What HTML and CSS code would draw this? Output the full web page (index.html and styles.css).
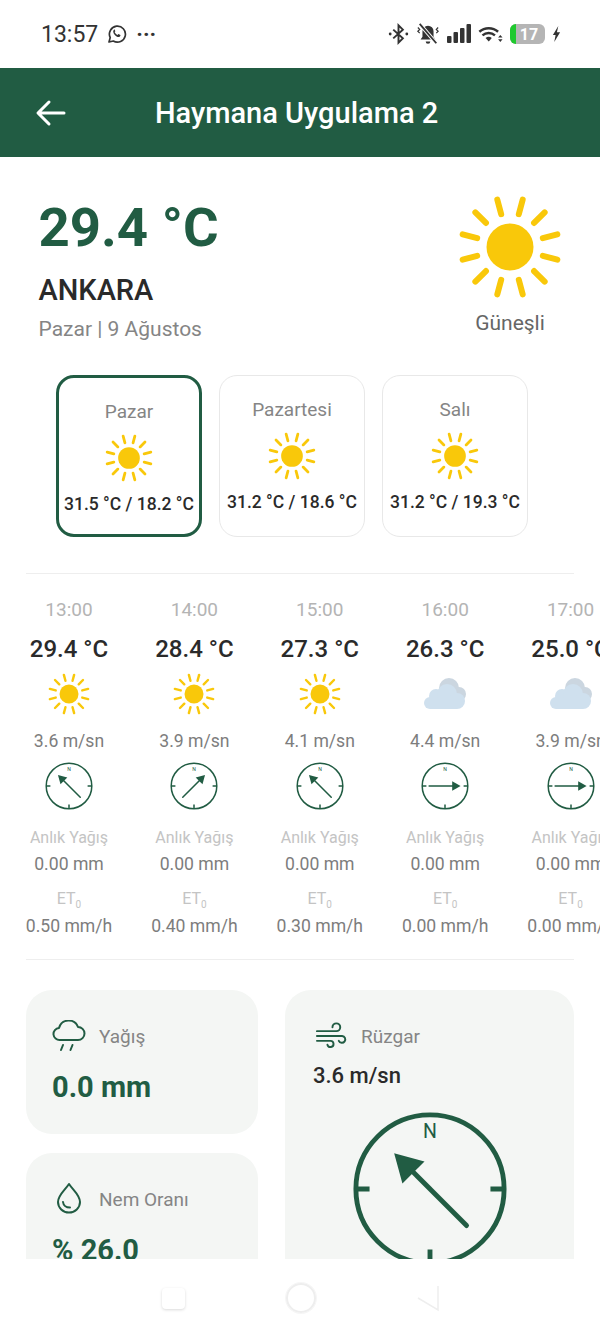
FILE: index.html
```html
<html>
<head>
  <meta charset="UTF-8">
  <meta name="viewport" content="width=device-width, initial-scale=1.0">
  <title>Haymana Uygulama 2</title>
  <link rel="stylesheet" href="styles.css">
</head>
<body>
  <!-- shared icons -->
  <svg class="defs" width="0" height="0">
    <defs>
      <symbol id="sun" viewBox="0 0 104 104">
        <circle cx="52" cy="52" r="23.5" fill="#f9c80a"/>
        <g stroke="#f9c80a" stroke-width="6" stroke-linecap="round">
          <path d="M52 18 V3" transform="rotate(15 52 52)"/>
          <path d="M52 18 V3" transform="rotate(45 52 52)"/>
          <path d="M52 18 V3" transform="rotate(75 52 52)"/>
          <path d="M52 18 V3" transform="rotate(105 52 52)"/>
          <path d="M52 18 V3" transform="rotate(135 52 52)"/>
          <path d="M52 18 V3" transform="rotate(165 52 52)"/>
          <path d="M52 18 V3" transform="rotate(195 52 52)"/>
          <path d="M52 18 V3" transform="rotate(225 52 52)"/>
          <path d="M52 18 V3" transform="rotate(255 52 52)"/>
          <path d="M52 18 V3" transform="rotate(285 52 52)"/>
          <path d="M52 18 V3" transform="rotate(315 52 52)"/>
          <path d="M52 18 V3" transform="rotate(345 52 52)"/>
        </g>
      </symbol>
      <symbol id="cloud" viewBox="0 0 42 42">
        <g fill="#cbd6e0">
          <circle cx="25" cy="15" r="10"/>
          <circle cx="35" cy="21" r="7"/>
          <rect x="16" y="18" width="19" height="10"/>
        </g>
        <g fill="#cfe0ee">
          <circle cx="6" cy="30" r="6"/>
          <circle cx="12" cy="23" r="7"/>
          <circle cx="23" cy="21" r="10"/>
          <circle cx="33" cy="28" r="8"/>
          <rect x="6" y="26" width="27" height="10"/>
        </g>
      </symbol>
      <g id="face" fill="none" stroke="#215c43">
        <circle r="76" stroke-width="5"/>
        <path d="M-76 0H-62M76 0H62M0 76V62" stroke-width="5"/>
      </g>
      <g id="needle" fill="#215c43">
        <path d="M0 -52L16 -24H-16Z"/>
        <path d="M0 -26V53" stroke="#215c43" stroke-width="5" stroke-linecap="round"/>
      </g>
    </defs>
  </svg>

  <div class="status-bar">
    <div class="status-left">
      <span class="clock">13:57</span>
      <svg width="20" height="20" viewBox="0 0 20 20">
        <path d="M2 18l1.200-4.400A8 8 0 1 1 6.300 17z" fill="none" stroke="#333" stroke-width="1.700" stroke-linejoin="round"/>
        <path d="M7 5.800c-1.300 1-1 3 .6 4.900 1.700 2 3.700 2.900 5 2.100.8-.5 1-1.300.8-1.700l-2-1-.9 1c-1.200-.5-2.300-1.700-2.900-3l.8-.9-.9-2z" fill="#333"/>
      </svg>
      <span class="more">···</span>
    </div>
    <div class="status-right">
      <svg width="21" height="24" viewBox="0 0 24 24" fill="none" stroke="#333" stroke-width="2.200">
        <path d="M6 7l11 10-5 5V2l5 5L6 17"/>
        <circle cx="2.500" cy="12" r="1.600" fill="#333" stroke="none"/>
        <circle cx="21.500" cy="12" r="1.600" fill="#333" stroke="none"/>
      </svg>
      <svg width="24" height="24" viewBox="0 0 26 24">
        <path d="M13 3a6 6 0 0 0-6 6v6l-2 3h16l-2-3V9a6 6 0 0 0-6-6z" fill="#333"/>
        <path d="M10.500 20a2.500 2.500 0 0 0 5 0z" fill="#333"/>
        <path d="M4 1l18 21" stroke="#fff" stroke-width="4"/>
        <path d="M4 1l18 21" stroke="#333" stroke-width="2"/>
        <path d="M2 5l2 2-2 2 2 2M24 5l-2 2 2 2-2 2" fill="none" stroke="#333" stroke-width="1.300"/>
      </svg>
      <svg width="24" height="20" viewBox="0 0 24 20" fill="#333">
        <rect x="0" y="12" width="4.500" height="7" rx="1"/>
        <rect x="6.500" y="8" width="4.500" height="11" rx="1"/>
        <rect x="13" y="4" width="4.500" height="15" rx="1"/>
        <rect x="19.500" y="0" width="4.500" height="19" rx="1"/>
      </svg>
      <svg width="25" height="20" viewBox="0 0 28 20">
        <path d="M1.500 7.500a16 16 0 0 1 21 0M5 11.500a11 11 0 0 1 14 0" fill="none" stroke="#333" stroke-width="2.800"/>
        <path d="M8.500 14.500a5.500 5.500 0 0 1 7 0L12 18.500z" fill="#333"/>
        <path d="M25 11l2.500 3h-5zM25 19l2.500-3h-5z" fill="#333"/>
      </svg>
      <div class="battery">
        <span class="battery-level"></span>
        <span class="battery-text">17</span>
      </div>
      <svg width="9" height="18" viewBox="0 0 10 18" fill="#333">
        <path d="M7 0L1 10h3l-1.500 8L9 7H5.500z"/>
      </svg>
    </div>
  </div>

  <div class="app-bar">
    <svg class="back" width="32" height="28" viewBox="0 0 32 28" fill="none" stroke="#fff" stroke-width="3" stroke-linecap="round" stroke-linejoin="round">
      <path d="M29 14H4M14 3L3 14l11 11"/>
    </svg>
    <h1>Haymana Uygulama 2</h1>
  </div>

  <div class="content">
    <div class="hero">
      <div>
        <div class="hero-temp">29.4 °C</div>
        <div class="hero-city">ANKARA</div>
        <div class="hero-date">Pazar | 9 Ağustos</div>
      </div>
      <div class="hero-side">
        <svg width="104" height="104"><use href="#sun"/></svg>
        <span>Güneşli</span>
      </div>
    </div>

    <div class="days">
      <div class="day active">
        <span class="day-name">Pazar</span>
        <svg width="48" height="48"><use href="#sun"/></svg>
        <span class="day-temp">31.5 °C / 18.2 °C</span>
      </div>
      <div class="day">
        <span class="day-name">Pazartesi</span>
        <svg width="48" height="48"><use href="#sun"/></svg>
        <span class="day-temp">31.2 °C / 18.6 °C</span>
      </div>
      <div class="day">
        <span class="day-name">Salı</span>
        <svg width="48" height="48"><use href="#sun"/></svg>
        <span class="day-temp">31.2 °C / 19.3 °C</span>
      </div>
    </div>

    <div class="hours">
      <div class="hour">
        <span class="hour-time">13:00</span>
        <span class="hour-temp">29.4 °C</span>
        <svg class="hour-icon" width="42" height="42"><use href="#sun"/></svg>
        <span class="hour-value">3.6 m/sn</span>
        <svg class="hour-compass" width="48" height="48" viewBox="-80 -80 160 160"><use href="#face"/><use href="#needle" transform="rotate(-45)"/><text class="compass-n small" y="-50">N</text></svg>
        <span class="hour-label">Anlık Yağış</span>
        <span class="hour-value">0.00 mm</span>
        <span class="hour-label et">ET<sub>0</sub></span>
        <span class="hour-value">0.50 mm/h</span>
      </div>
      <div class="hour">
        <span class="hour-time">14:00</span>
        <span class="hour-temp">28.4 °C</span>
        <svg class="hour-icon" width="42" height="42"><use href="#sun"/></svg>
        <span class="hour-value">3.9 m/sn</span>
        <svg class="hour-compass" width="48" height="48" viewBox="-80 -80 160 160"><use href="#face"/><use href="#needle" transform="rotate(45)"/><text class="compass-n small" y="-50">N</text></svg>
        <span class="hour-label">Anlık Yağış</span>
        <span class="hour-value">0.00 mm</span>
        <span class="hour-label et">ET<sub>0</sub></span>
        <span class="hour-value">0.40 mm/h</span>
      </div>
      <div class="hour">
        <span class="hour-time">15:00</span>
        <span class="hour-temp">27.3 °C</span>
        <svg class="hour-icon" width="42" height="42"><use href="#sun"/></svg>
        <span class="hour-value">4.1 m/sn</span>
        <svg class="hour-compass" width="48" height="48" viewBox="-80 -80 160 160"><use href="#face"/><use href="#needle" transform="rotate(-45)"/><text class="compass-n small" y="-50">N</text></svg>
        <span class="hour-label">Anlık Yağış</span>
        <span class="hour-value">0.00 mm</span>
        <span class="hour-label et">ET<sub>0</sub></span>
        <span class="hour-value">0.30 mm/h</span>
      </div>
      <div class="hour">
        <span class="hour-time">16:00</span>
        <span class="hour-temp">26.3 °C</span>
        <svg class="hour-icon" width="42" height="42"><use href="#cloud"/></svg>
        <span class="hour-value">4.4 m/sn</span>
        <svg class="hour-compass" width="48" height="48" viewBox="-80 -80 160 160"><use href="#face"/><use href="#needle" transform="rotate(90)"/><text class="compass-n small" y="-50">N</text></svg>
        <span class="hour-label">Anlık Yağış</span>
        <span class="hour-value">0.00 mm</span>
        <span class="hour-label et">ET<sub>0</sub></span>
        <span class="hour-value">0.00 mm/h</span>
      </div>
      <div class="hour">
        <span class="hour-time">17:00</span>
        <span class="hour-temp">25.0 °C</span>
        <svg class="hour-icon" width="42" height="42"><use href="#cloud"/></svg>
        <span class="hour-value">3.9 m/sn</span>
        <svg class="hour-compass" width="48" height="48" viewBox="-80 -80 160 160"><use href="#face"/><use href="#needle" transform="rotate(90)"/><text class="compass-n small" y="-50">N</text></svg>
        <span class="hour-label">Anlık Yağış</span>
        <span class="hour-value">0.00 mm</span>
        <span class="hour-label et">ET<sub>0</sub></span>
        <span class="hour-value">0.00 mm/h</span>
      </div>
    </div>

    <div class="stats">
      <div class="stats-col">
        <div class="stat">
          <div class="stat-head">
            <svg width="34" height="32" viewBox="0 0 34 32" fill="none" stroke="#215c43" stroke-width="2" stroke-linecap="round" stroke-linejoin="round">
              <path d="M8 21a6 6 0 0 1-1-12 10 10 0 0 1 19-1 6.500 6.500 0 0 1 0 13z" transform="translate(0 -1)"/>
              <path d="M9 31l2-5M18.500 31l2-5" transform="translate(0 -1)"/>
            </svg>
            <span>Yağış</span>
          </div>
          <div class="stat-value">0.0 mm</div>
        </div>
        <div class="stat">
          <div class="stat-head">
            <svg width="34" height="32" viewBox="0 0 34 32" fill="none" stroke="#215c43" stroke-width="2" stroke-linecap="round" stroke-linejoin="round">
              <path d="M17 2C13 8 6 13 6 20a11 10.500 0 0 0 22 0C28 13 21 8 17 2z" transform="translate(0 -1)"/>
              <path d="M11 20c.3 3 3 5.500 7 5.500" transform="translate(0 -1)"/>
            </svg>
            <span>Nem Oranı</span>
          </div>
          <div class="stat-value">% 26.0</div>
        </div>
      </div>
      <div class="stat wind">
        <div class="stat-head">
          <svg width="33" height="32" viewBox="0 0 34 32" fill="none" stroke="#215c43" stroke-width="2" stroke-linecap="round">
            <path d="M2 11H22a4 4 0 1 0-4-4M2 16H28a3.500 3.500 0 1 1-3.500 5M2 21H16a3.200 3.200 0 1 1-3.200 4"/>
          </svg>
          <span>Rüzgar</span>
        </div>
        <div class="wind-speed">3.6 m/sn</div>
        <svg class="wind-compass" width="156" height="156" viewBox="-80 -80 160 160"><use href="#face"/><use href="#needle" transform="rotate(-45)"/><text class="compass-n" y="-52">N</text></svg>
      </div>
    </div>
  </div>

  <div class="nav-bar">
    <span class="nav-square"></span>
    <span class="nav-circle"></span>
    <svg width="22" height="30" viewBox="0 0 22 30" fill="none" stroke="#eeeeee" stroke-width="1.500">
      <path d="M21 3V27L1 15"/>
    </svg>
  </div>
</body>
</html>
```

FILE: styles.css
```css
html, body {
    margin: 0;
    padding: 0;
}

body {
    position: relative;
    width: 600px;
    height: 1334px;
    overflow: hidden;
    background-color: #ffffff;
    font-family: 'Roboto', sans-serif;
}

.defs {
    display: block;
}

/* Status bar */
.status-bar {
    height: 68px;
    box-sizing: border-box;
    padding: 0 39px 0 41px;
    display: flex;
    justify-content: space-between;
    align-items: center;
}

.status-left {
    display: flex;
    align-items: center;
    gap: 9px;
}

.clock {
    font-size: 23px;
    color: #333333;
}

.more {
    font-size: 22px;
    font-weight: 700;
    color: #333333;
}

.status-right {
    display: flex;
    align-items: center;
    gap: 7px;
}

.battery {
    position: relative;
    width: 35px;
    height: 20px;
    border-radius: 6px;
    background-color: #b5b5b5;
    overflow: hidden;
    display: flex;
    align-items: center;
    justify-content: center;
}

.battery-level {
    position: absolute;
    left: 0;
    top: 0;
    bottom: 0;
    width: 6px;
    background-color: #1fc92f;
}

.battery-text {
    font-size: 16px;
    font-weight: 700;
    color: #ffffff;
    margin-left: 3px;
}

/* App bar */
.app-bar {
    height: 89px;
    background-color: #215c43;
    display: flex;
    align-items: center;
    padding-left: 35px;
}

.back {
    flex: none;
}

.app-bar h1 {
    margin: 0 0 0 88px;
    font-size: 29px;
    font-weight: 500;
    color: #ffffff;
}

/* Hero */
.content {
    padding: 0 26px;
}

.hero {
    display: flex;
    justify-content: space-between;
    padding: 38px 12px 0 12.500px;
}

.hero-temp {
    font-size: 54.500px;
    line-height: 64px;
    font-weight: 700;
    color: #215c43;
}

.hero-city {
    margin-top: 13px;
    font-size: 29px;
    line-height: 36px;
    font-weight: 500;
    color: #2a2a2a;
}

.hero-date {
    margin-top: 9px;
    font-size: 21px;
    line-height: 24px;
    color: #858585;
}

.hero-side {
    display: flex;
    flex-direction: column;
    align-items: center;
    font-size: 21px;
    line-height: 24px;
    color: #666666;
}

.hero-side svg {
    margin-bottom: 12px;
}

/* Day cards */
.days {
    display: flex;
    gap: 17px;
    padding: 34px 0 36px 30px;
    border-bottom: 1px solid #eeeeee;
}

.day {
    width: 146px;
    height: 162px;
    box-sizing: border-box;
    padding-top: 23px;
    border: 1.5px solid #e8e8e8;
    border-radius: 18px;
    display: flex;
    flex-direction: column;
    align-items: center;
}

.day.active {
    border: 3px solid #215c43;
}

.day-name {
    font-size: 19px;
    line-height: 22px;
    color: #858585;
}

.day svg {
    margin-top: 11px;
}

.day-temp {
    margin-top: 11px;
    font-size: 17.500px;
    line-height: 22px;
    font-weight: 500;
    color: #2a2a2a;
    white-space: nowrap;
}

/* Hourly row */
.hours {
    display: flex;
    gap: 39.400px;
    padding: 24px 0 22px;
    width: 574px;
}

.hour {
    flex: none;
    width: 86px;
    display: flex;
    flex-direction: column;
    align-items: center;
    white-space: nowrap;
}

.hour-time {
    font-size: 19px;
    line-height: 24px;
    color: #b4b4b4;
}

.hour-temp {
    margin-top: 13px;
    font-size: 24px;
    line-height: 28px;
    font-weight: 500;
    color: #2a2a2a;
}

.hour-icon {
    margin-top: 10px;
}

.hour-value {
    font-size: 17.600px;
    line-height: 22px;
    color: #7d7d7d;
}

.hour-icon + .hour-value {
    margin-top: 15px;
}

.hour-compass {
    margin-top: 10px;
}

.hour-label {
    margin-top: 17px;
    font-size: 16px;
    line-height: 22px;
    color: #c4c4c4;
}

.hour-label + .hour-value {
    margin-top: 4px;
}

.hour-label.et {
    margin-top: 13px;
}

.hour-label.et + .hour-value {
    margin-top: 5px;
}

.et sub {
    font-size: 10px;
    line-height: 0;
}

.compass-n {
    font-size: 20px;
    text-anchor: middle;
    fill: #215c43;
}

.compass-n.small {
    font-size: 17px;
}

/* Stat cards */
.stats {
    display: grid;
    grid-template-columns: 232px 289px;
    gap: 27px;
    padding-top: 30px;
    border-top: 1px solid #eeeeee;
}

.stats-col {
    display: flex;
    flex-direction: column;
    gap: 19px;
}

.stat {
    height: 144px;
    box-sizing: border-box;
    padding: 30px 26px 0;
    border-radius: 26px;
    background-color: #f4f6f4;
}

.stat.wind {
    height: auto;
}

.stat-head {
    display: flex;
    align-items: center;
    height: 32px;
    gap: 13px;
    font-size: 19px;
    color: #858585;
}

.stat-head svg {
    flex: none;
}

.wind .stat-head svg {
    margin-left: 4px;
}

.stat-value {
    margin-top: 18px;
    font-size: 29px;
    line-height: 34px;
    font-weight: 700;
    color: #215c43;
}

.wind-speed {
    margin-top: 11px;
    margin-left: 2px;
    font-size: 22px;
    line-height: 26px;
    font-weight: 500;
    color: #2a2a2a;
}

.wind-compass {
    display: block;
    margin: 22px 0 0 40.500px;
}

.nav-bar {
    position: absolute;
    left: 0;
    right: 0;
    bottom: 0;
    height: 75px;
    background-color: #ffffff;
    display: flex;
    justify-content: center;
    align-items: center;
    gap: 101px;
    padding-top: 3px;
    box-sizing: border-box;
}

.nav-square {
    width: 23px;
    height: 21px;
    border-radius: 4px;
    background-color: #ffffff;
    box-shadow: 0 1px 3px rgba(0, 0, 0, 0.15);
}

.nav-circle {
    width: 26px;
    height: 26px;
    border: 2px solid #eeeeee;
    border-radius: 50%;
    box-shadow: 0 0 0 1px #f6f6f6;
}
```
